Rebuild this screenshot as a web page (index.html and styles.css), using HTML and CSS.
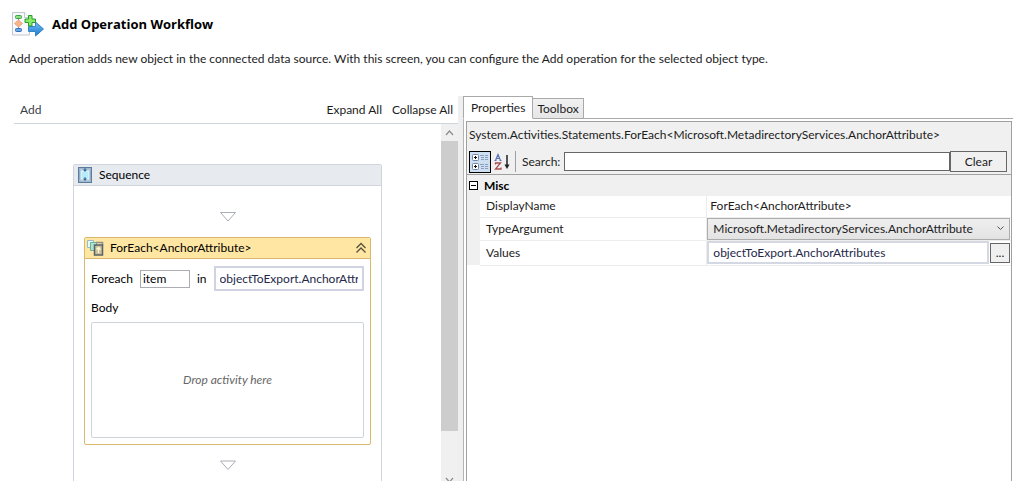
FILE: index.html
```
<!DOCTYPE html>
<html lang="en">
<head>
<meta charset="utf-8">
<title>Add Operation Workflow</title>
<link rel="stylesheet" href="styles.css">
</head>
<body>
<header class="page-head">
  <div class="title-row">
    <svg class="title-icon" width="34" height="28" viewBox="0 0 34 28" aria-hidden="true">
      <defs>
        <linearGradient id="arrow" x1="0" y1="0" x2="0" y2="1"><stop offset="0" stop-color="#6fc0f5"/><stop offset="1" stop-color="#1d78cf"/></linearGradient>
      </defs>
      <path d="M2.500 2.500h12l5 5v17.500h-17z" fill="#f8f9fc" stroke="#c3c6ce"/>
      <path d="M14.500 2.500v5h5" fill="#fff" stroke="#c3c6ce"/>
      <path d="M8.500 8v12" stroke="#8a8f96"/>
      <rect x="5.500" y="5.500" width="6" height="3" rx="1" fill="#8fe07c" stroke="#38a04a"/>
      <path d="M8.500 10l4 3.500-4 3.500-4-3.500z" fill="#f9b58a" stroke="#e79a6c" stroke-width=".8"/>
      <rect x="5.500" y="18.500" width="6" height="3" rx="1" fill="#65a9ea" stroke="#2f6cb4"/>
      <path d="M18.500 16.500h7v-4.500l8 7-8 7v-4.500h-7z" fill="url(#arrow)" stroke="#3583cb"/>
      <path d="M18.500 5.500h3.500v3.500h3.500v3.500h-3.500v3.500h-3.500v-3.500h-3.500v-3.500h3.500z" fill="#8ce867" stroke="#259b32"/>
    </svg>
    <h1 class="title">Add Operation Workflow</h1>
  </div>
  <p class="intro">Add operation adds new object in the connected data source. With this screen, you can configure the Add operation for the selected object type.</p>
</header>

<main class="workspace">
  <section class="designer">
    <div class="designer-bar">
      <span class="crumb">Add</span>
      <button class="link-button" type="button">Expand All</button>
      <button class="link-button" type="button">Collapse All</button>
    </div>
    <div class="designer-view">
      <div class="canvas">
        <article class="sequence">
          <header class="sequence-head">
            <svg width="14" height="16" viewBox="0 0 14 16" aria-hidden="true">
              <rect x=".5" y=".5" width="13" height="15" fill="#8fabc6" stroke="#5c7c9c"/>
              <path d="M1.500 1.500h11v2h-11zM1.500 12.500h11v2h-11z" fill="#b4c8d8"/>
              <rect x="3" y="4" width="8" height="8" fill="#b9ecfa" stroke="#e8fbff"/>
              <path d="M7 1v3M7 10v3" stroke="#34699c"/>
              <path d="M5 2.500h4L7 5zM5 11.500h4L7 14z" fill="#2f6598"/>
            </svg>
            <span>Sequence</span>
          </header>
          <div class="sequence-body">
            <svg class="drop-point" width="18" height="11" viewBox="0 0 18 11" aria-hidden="true"><path d="M1.500 1.500h15L9 10z" fill="#fff" stroke="#a9adb7"/></svg>
            <section class="foreach">
              <header class="foreach-head">
                <svg width="17" height="16" viewBox="0 0 17 16" aria-hidden="true">
                  <path d="M.5.500h6v7h-6z" fill="#e5fafa" stroke="#98bcc0"/>
                  <path d="M3.500 2.500h6v8h-6z" fill="#a7e8cf" stroke="#74aba0"/>
                  <path d="M9 2.500h6.500v3" fill="none" stroke="#8a918c" stroke-width="1.500"/>
                  <rect x="7.500" y="5" width="8" height="10" fill="#c9c29c" stroke="#59616a" stroke-width="1.500"/>
                  <path d="M11.500 13V7.500M9.500 9.500l2-2 2 2" fill="none" stroke="#fff6cd" stroke-width="1.300"/>
                </svg>
                <span class="foreach-title">ForEach&lt;AnchorAttribute&gt;</span>
                <button class="collapse" type="button" aria-label="Collapse">
                  <svg width="12" height="12" viewBox="0 0 12 12" aria-hidden="true"><path d="M1.500 6L6 1.500 10.500 6M1.500 10.500L6 6l4.500 4.500" fill="none" stroke="#55513f" stroke-width="1.300"/></svg>
                </button>
              </header>
              <div class="foreach-body">
                <div class="foreach-row">
                  <label for="item">Foreach</label>
                  <input class="item-input" id="item" type="text" value="item">
                  <label for="source">in</label>
                  <input class="source-input" id="source" type="text" value="objectToExport.AnchorAttributes">
                </div>
                <div class="body-label">Body</div>
                <div class="drop-zone">Drop activity here</div>
              </div>
            </section>
            <svg class="drop-point" width="18" height="11" viewBox="0 0 18 11" aria-hidden="true"><path d="M1.500 1h15L9 9.500z" fill="#fff" stroke="#a9adb7"/></svg>
          </div>
        </article>
      </div>
      <div class="scrollbar">
        <button class="scroll-step" type="button" aria-label="Scroll up"><svg width="9" height="6" viewBox="0 0 9 6" aria-hidden="true"><path d="M1 5l3.500-4L8 5" fill="none" stroke="#8b8b8b" stroke-width="1.200"/></svg></button>
        <div class="scroll-track"><div class="scroll-thumb"></div></div>
        <button class="scroll-step" type="button" aria-label="Scroll down"><svg width="9" height="6" viewBox="0 0 9 6" aria-hidden="true"><path d="M1 1l3.500 4L8 1" fill="none" stroke="#8b8b8b" stroke-width="1.200"/></svg></button>
      </div>
    </div>
  </section>

  <section class="side">
    <div class="tabs" role="tablist">
      <button class="tab tab-active" type="button" role="tab" aria-selected="true">Properties</button>
      <button class="tab" type="button" role="tab" aria-selected="false">Toolbox</button>
      <span class="tab-rest"></span>
    </div>
    <div class="side-page">
      <div class="inspector">
        <div class="inspector-head">
          <div class="type-name">System.Activities.Statements.ForEach&lt;Microsoft.MetadirectoryServices.AnchorAttribute&gt;</div>
          <div class="search-row">
            <button class="sort-button sort-active" type="button" aria-label="Categorized">
              <svg width="18" height="18" viewBox="0 0 18 18" aria-hidden="true">
                <rect x="1.500" y="1.500" width="6" height="6" rx="1" fill="#fff" stroke="#7184a3"/>
                <rect x="1.500" y="10.500" width="6" height="6" rx="1" fill="#fff" stroke="#7184a3"/>
                <path d="M3 4.500h3M4.500 3v3M3 13.500h3M4.500 12v3" stroke="#111"/>
                <path d="M9 2.500h4M14 2.500h3M10 4.500h3M14 4.500h3M10 6.500h3M14 6.500h3M9 11.500h4M14 11.500h3M10 13.500h3M14 13.500h3M10 15.500h3M14 15.500h3" stroke="#8b9fbd"/>
              </svg>
            </button>
            <button class="sort-button" type="button" aria-label="Alphabetical">
              <svg width="18" height="18" viewBox="0 0 18 18" aria-hidden="true">
                <path d="M2.500 7.500L5 1.500 7.500 7.500M3 5.500h4M1.500 7.500h2M6.500 7.500h2" fill="none" stroke="#5871b5" stroke-width="1.200"/>
                <path d="M2.500 11.500v-1.500h5L2.500 16h5.500v-1.500" fill="none" stroke="#a94d51" stroke-width="1.300"/>
                <path d="M14 2v11" stroke="#222" stroke-width="1.500"/><path d="M11.500 11.500h5L14 16z" fill="#222"/>
              </svg>
            </button>
            <span class="divider"></span>
            <label class="search-label" for="search">Search:</label>
            <input class="search-input" id="search" type="text">
            <button class="clear" type="button">Clear</button>
          </div>
        </div>
        <table class="grid">
          <colgroup><col class="col-gutter"><col class="col-name"><col class="col-value"></colgroup>
          <tbody>
            <tr class="group">
              <th class="group-name" colspan="3" scope="colgroup"><div class="group-line"><button class="toggle" type="button" aria-label="Collapse Misc"><svg width="9" height="9" viewBox="0 0 9 9" aria-hidden="true"><rect x=".5" y=".5" width="8" height="8" fill="#fff" stroke="#000"/><path d="M2 4.500h5" stroke="#000"/></svg></button>Misc</div></th>
            </tr>
            <tr class="row-name">
              <td class="gutter"></td><th class="name" scope="row">DisplayName</th><td class="value value-text">ForEach&lt;AnchorAttribute&gt;</td>
            </tr>
            <tr class="row-type">
              <td class="gutter"></td><th class="name" scope="row"><label for="type">TypeArgument</label></th>
              <td class="value"><div class="select-wrap"><select class="type-select" id="type"><option>Microsoft.MetadirectoryServices.AnchorAttribute</option></select><svg class="select-arrow" width="7" height="5" viewBox="0 0 7 5" aria-hidden="true"><path d="M.5.500l3 3 3-3" fill="none" stroke="#555"/></svg></div></td>
            </tr>
            <tr class="row-values">
              <td class="gutter"></td><th class="name" scope="row"><label for="values">Values</label></th>
              <td class="value"><div class="values-line"><input class="values-input" id="values" type="text" value="objectToExport.AnchorAttributes"><button class="more" type="button" aria-label="Edit values">...</button></div></td>
            </tr>
          </tbody>
        </table>
      </div>
    </div>
  </section>
</main>
</body>
</html>
```
FILE: styles.css
```
* { box-sizing: border-box; }

body {
  margin: 0;
  height: 100vh;
  overflow: hidden;
  display: flex;
  flex-direction: column;
  background: #fff;
  color: #1c1c1c;
  font: 12px/16px Lato, "Open Sans", sans-serif;
}

button, input, select { font: inherit; color: inherit; margin: 0; padding: 0; border-radius: 0; }
button { background: none; border: 0; }
svg { display: block; flex: none; }

.page-head { padding: 10px 9px 0; }
.title-row { display: flex; align-items: center; gap: 8px; padding-left: 1px; }
.title { margin: 0; font-family: "Open Sans", sans-serif; font-size: 13px; font-weight: 700; line-height: 18px; color: #000; }
.intro { margin: 13px 0 0; white-space: nowrap; }

.workspace {
  flex: 1;
  min-height: 0;
  display: grid;
  grid-template-columns: minmax(0, 449fr) minmax(0, 550fr);
  margin-top: 29px;
  padding-left: 14px;
}

.designer { display: flex; flex-direction: column; min-height: 0; border-right: 5px solid #efefef; }
.designer-bar { display: flex; align-items: center; gap: 10px; height: 28px; padding: 0 5px 0 6px; border-bottom: 1px solid #cfd6db; }
.crumb { flex: 1; color: #3a3f4a; }
.designer-view { flex: 1; display: flex; min-height: 0; overflow: hidden; }
.canvas { flex: 1; padding: 40px 0 0; }

.sequence { width: 309px; margin: 0 auto; border: 1px solid #cfd4de; border-radius: 2px 2px 0 0; }
.sequence-head { display: flex; align-items: center; gap: 7px; height: 21px; padding-left: 4px; background: #e7eaee; border-bottom: 1px solid #cfd4de; color: #000; }
.sequence-body { display: flex; flex-direction: column; align-items: center; gap: 15px; padding: 25px 10px; }

.foreach { align-self: stretch; border: 1px solid #d9ba6d; border-radius: 2px; color: #000; }
.foreach-head { display: flex; align-items: center; height: 21px; padding: 0 3px 0 2px; background: #ffe7a3; border-bottom: 1px solid #d9ba6d; }
.foreach-title { flex: 1; padding-left: 6px; }
.collapse { padding: 0; }
.foreach-body { padding: 7px 6px 6px; }
.foreach-row { display: flex; align-items: center; gap: 7px; }
.item-input { width: 50px; height: 18px; padding: 0 2px; border: 1px solid #abadb3; }
.source-input { flex: 1; min-width: 0; height: 25px; padding: 0 4px; border: 2px solid #cfd3e2; color: #26284a; }
.body-label { margin: 9px 0 6px; }
.drop-zone { display: flex; align-items: center; justify-content: center; height: 116px; border: 1px solid #cdd5dc; border-radius: 2px; color: #666; font-style: italic; }

.scrollbar { flex: none; display: flex; flex-direction: column; width: 17px; height: calc(100% + 7px); background: #f0f0f0; }
.scroll-step { display: flex; align-items: center; justify-content: center; height: 17px; }
.scroll-track { flex: 1; }
.scroll-thumb { height: 88%; background: #cdcdcd; }

.side { display: flex; flex-direction: column; min-height: 0; }
.tabs { display: flex; align-items: flex-end; height: 23px; }
.tab { height: 21px; padding: 0 4px; border: 1px solid #a9a9a9; border-left: 0; background: linear-gradient(#f1f1f1, #e6e6e6); }
.tab-active { height: 23px; padding: 0 7px; border-left: 1px solid #a9a9a9; border-bottom-color: #fff; background: #fff; }
.tab-rest { flex: 1; border-bottom: 1px solid #a9a9a9; }
.side-page { flex: 1; display: flex; padding: 2px 1px 0 2px; border-left: 1px solid #b5b5b5; }
.inspector { flex: 1; min-width: 0; border: 1px solid #a0a0a0; border-bottom: 0; }
.inspector-head { padding: 5px 4px 2px 2px; background: #f0f0f0; border-bottom: 1px solid #a0a0a0; }
.type-name { white-space: nowrap; }
.search-row { display: flex; align-items: center; height: 21px; margin-top: 8px; }
.sort-button { display: flex; align-items: center; justify-content: center; width: 22px; height: 22px; }
.sort-active { border: 1px solid #000; background: #cfdff2; }
.divider { width: 1px; height: 21px; margin: 0 6px 0 2px; background: #a0a0a0; }
.search-label { margin-right: 4px; }
.search-input { flex: 1; min-width: 0; height: 19px; padding: 0 3px; border: 1px solid #666; background: #fff; }
.clear { width: 57px; height: 21px; border: 1px solid #666; background: #f0f0f0; }

.grid { width: 100%; border-collapse: collapse; table-layout: fixed; }
.grid th, .grid td { padding: 0; text-align: left; font-weight: 400; }
.col-gutter { width: 13px; }
.col-name { width: 41.7%; }
.grid .group-name { height: 21px; background: #f0f0f0; font-weight: 700; color: #000; }
.group-line { display: flex; align-items: center; gap: 6px; padding-left: 2px; }
.gutter { background: #f0f0f0; }
.row-name { height: 21px; }
.row-type { height: 23px; }
.row-values { height: 25px; }
.grid .name { padding-left: 6px; border-bottom: 1px solid #ededed; border-right: 1px solid #ededed; }
.value { border-bottom: 1px solid #ededed; }
.grid .value-text { padding-left: 3px; }
.select-wrap { position: relative; margin-right: 1px; }
.type-select { display: block; appearance: none; width: 100%; height: 22px; padding-left: 5px; border: 1px solid #acacac; background: linear-gradient(#efefef, #e3e3e3); }
.select-arrow { position: absolute; right: 6px; top: 8px; pointer-events: none; }
.values-line { display: flex; align-items: center; gap: 1px; margin-right: 1px; }
.values-input { flex: 1; min-width: 0; height: 23px; padding: 0 4px; border: 2px solid #d3d8e2; color: #26284a; }
.more { width: 20px; height: 20px; border: 1px solid #666; background: #f0f0f0; }
```
